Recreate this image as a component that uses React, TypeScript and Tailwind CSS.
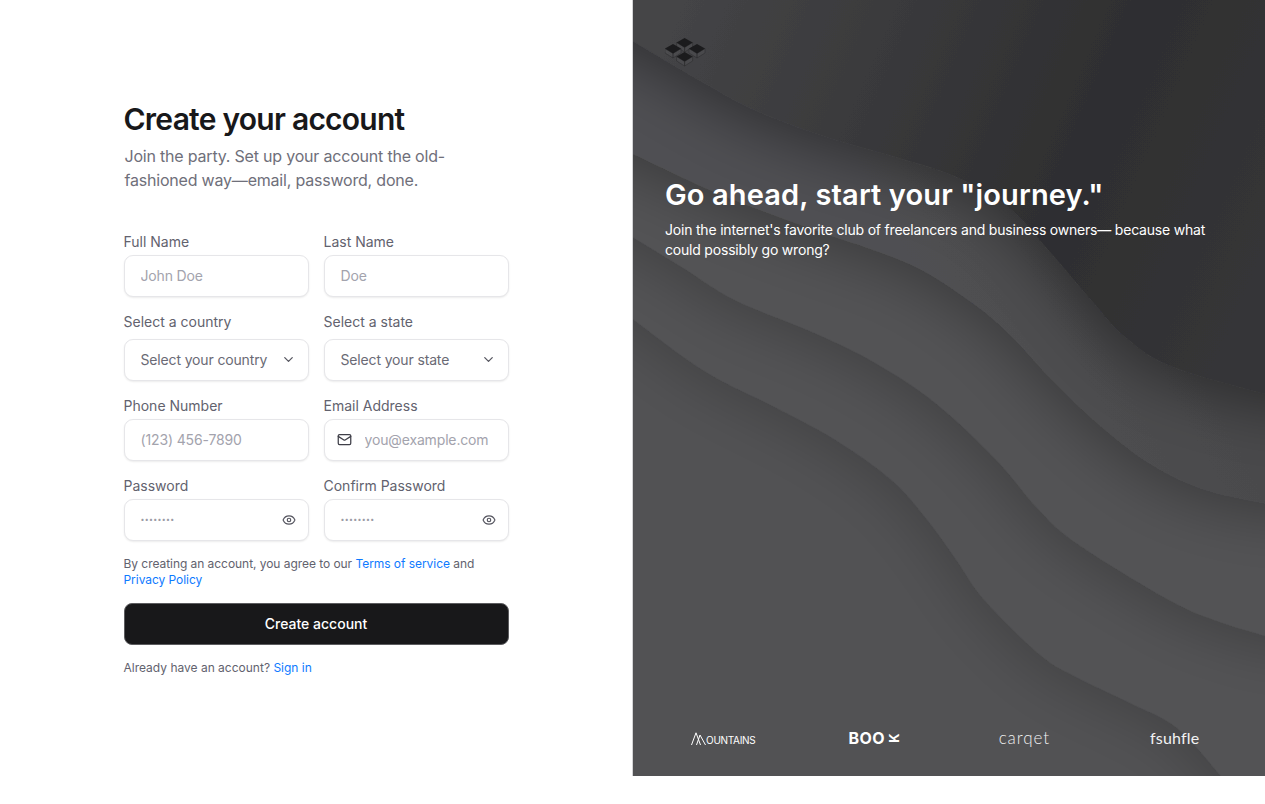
import { ChevronDown, Eye, Mail } from 'lucide-react'

const inputClass =
  'h-[42px] w-full rounded-[9px] border border-[#e6e6e9] bg-white px-4 text-sm tracking-[-0.15px] text-[#6a6a75] shadow-[0_1px_2px_rgba(0,0,0,0.08)] outline-none placeholder:text-[#a3a3ad]'

function Label({ text, className = 'mb-[3px]' }: { text: string; className?: string }) {
  return <label className={`block h-5 text-sm leading-5 text-[#62626e] ${className}`}>{text}</label>
}

function SelectBox({ text, label }: { text: string; label: string }) {
  return (
    <div>
      <Label text={label} className="mb-[7px]" />
      <div className="relative">
        <select className={`${inputClass} appearance-none`} defaultValue={text}>
          <option>{text}</option>
        </select>
        <ChevronDown size={15} className="pointer-events-none absolute right-[13px] top-[13px] text-[#55555f]" />
      </div>
    </div>
  )
}

function PasswordBox({ label }: { label: string }) {
  return (
    <div>
      <Label text={label} />
      <div className="relative">
        <div className={`${inputClass} flex items-center`}>
          <span className="text-[7px] tracking-[0.3px] text-[#9a9aa4]">••••••••</span>
        </div>
        <Eye size={14} className="absolute right-[13px] top-[14px] text-[#55555f]" />
      </div>
    </div>
  )
}

// catmull-rom through the traced points, so the bands stay smooth
function smooth(pts: number[][]) {
  let d = `M${pts[0][0]} ${pts[0][1]}`
  for (let i = 0; i < pts.length - 1; i++) {
    const p0 = pts[i - 1] || pts[i]
    const p1 = pts[i]
    const p2 = pts[i + 1]
    const p3 = pts[i + 2] || p2
    const c1x = p1[0] + (p2[0] - p0[0]) / 6
    const c1y = p1[1] + (p2[1] - p0[1]) / 6
    const c2x = p2[0] - (p3[0] - p1[0]) / 6
    const c2y = p2[1] - (p3[1] - p1[1]) / 6
    d += ` C${c1x} ${c1y} ${c2x} ${c2y} ${p2[0]} ${p2[1]}`
  }
  return d
}

const curves = [
  // lowest band first, each one is painted over the last and shades it
  [[620, 310], [702, 370], [774, 407], [835, 440], [891, 480], [927, 520], [956, 560], [984, 600], [1040, 655], [1076, 677], [1130, 703], [1177, 728], [1221, 776], [1240, 800]],
  [[620, 230], [681, 267], [734, 300], [814, 333], [875, 363], [935, 403], [996, 460], [1036, 507], [1076, 543], [1169, 600], [1220, 622], [1280, 640]],
  [[620, 148], [714, 192], [806, 227], [907, 263], [968, 300], [1008, 333], [1052, 380], [1097, 423], [1149, 463], [1206, 490], [1280, 506]],
  [[620, 34], [693, 77], [754, 110], [826, 137], [895, 157], [956, 177], [1008, 207], [1048, 250], [1091, 300], [1125, 337], [1173, 367], [1280, 398]],
]

const shadeIds = ['cast0', 'cast1', 'cast2', 'cast3']

function Waves() {
  return (
    <svg className="absolute inset-0 h-full w-full" viewBox="632 0 633 776" preserveAspectRatio="none">
      <defs>
        <linearGradient id="top" gradientUnits="userSpaceOnUse" x1="680" y1="10" x2="1260" y2="260">
          <stop offset="0" stopColor="#444446" />
          <stop offset="0.68" stopColor="#2e2e30" />
          <stop offset="1" stopColor="#353537" />
        </linearGradient>
        <linearGradient id="band2" gradientUnits="userSpaceOnUse" x1="950" y1="340" x2="1250" y2="180">
          <stop offset="0" stopColor="#505052" />
          <stop offset="1" stopColor="#464648" />
        </linearGradient>
        <filter id="cast0" filterUnits="userSpaceOnUse" x="200" y="-400" width="1500" height="1500">
          <feDropShadow dx="-8" dy="12" stdDeviation="26" floodColor="#000000" floodOpacity="0.17" />
        </filter>
        <filter id="cast1" filterUnits="userSpaceOnUse" x="200" y="-400" width="1500" height="1500">
          <feDropShadow dx="-8" dy="12" stdDeviation="26" floodColor="#000000" floodOpacity="0.2" />
        </filter>
        <filter id="cast2" filterUnits="userSpaceOnUse" x="200" y="-400" width="1500" height="1500">
          <feDropShadow dx="-8" dy="12" stdDeviation="28" floodColor="#000000" floodOpacity="0.27" />
        </filter>
        <filter id="cast3" filterUnits="userSpaceOnUse" x="200" y="-400" width="1500" height="1500">
          <feDropShadow dx="-8" dy="12" stdDeviation="30" floodColor="#000000" floodOpacity="0.38" />
        </filter>
      </defs>
      <rect x="632" y="0" width="633" height="776" fill="#525254" />
      {curves.map((pts, i) => {
        const last = pts[pts.length - 1]
        // run the shape far past the panel so its outer sides cast nothing we can see
        const d = `${smooth(pts)} L1600 ${last[1]} L1600 -300 L300 -300 L300 ${pts[0][1]} Z`
        const fill = i === 3 ? 'url(#top)' : i === 2 ? 'url(#band2)' : '#525254'
        return <path key={i} d={d} fill={fill} filter={`url(#${shadeIds[i]})`} />
      })}
    </svg>
  )
}

function Cube({ x, y }: { x: number; y: number }) {
  return (
    <g transform={`translate(${x} ${y})`}>
      <path d="M0 4.5 L0 9 L8 14 L8 9.5 Z M16 4.5 L16 9 L8 14 L8 9.5 Z" fill="#ffffff" fillOpacity="0.04" stroke="#2a2a2c" strokeWidth="0.5" />
      <path d="M0 4.5 L8 0 L16 4.5 L8 9.5 Z" fill="#1b1b1d" />
    </g>
  )
}

function Logo() {
  return (
    <svg width="41" height="30" viewBox="0 0 41 30" className="block">
      <Cube x={11.6} y={1} />
      <Cube x={0} y={7} />
      <Cube x={24} y={7} />
      <Cube x={11.6} y={15} />
    </svg>
  )
}

export default function App() {
  return (
    <div className="flex h-[776px] w-full bg-white font-['Inter',sans-serif]">
      <div className="flex w-[632px] shrink-0 items-center justify-center">
        <div className="w-[385px]">
          <h1 className="text-[30px] font-semibold leading-9 tracking-[-0.75px] text-[#18181a]">Create your account</h1>
          <p className="mt-[7px] w-[340px] pl-px text-base leading-6 tracking-[-0.2px] text-[#6f6f7a]">
            Join the party. Set up your account the old-fashioned way—email, password, done.
          </p>

          <div className="mt-[40px] grid grid-cols-2 gap-x-[15px] gap-y-[15px]">
            <div>
              <Label text="Full Name" />
              <input className={inputClass} placeholder="John Doe" />
            </div>
            <div>
              <Label text="Last Name" />
              <input className={inputClass} placeholder="Doe" />
            </div>
            <SelectBox label="Select a country" text="Select your country" />
            <SelectBox label="Select a state" text="Select your state" />
            <div>
              <Label text="Phone Number" />
              <input className={inputClass} placeholder="(123) 456-7890" />
            </div>
            <div>
              <Label text="Email Address" />
              <div className="relative">
                <input className={`${inputClass} pl-10`} placeholder="you@example.com" />
                <Mail size={15} className="absolute left-[13px] top-[13px] text-[#3f3f48]" />
              </div>
            </div>
            <PasswordBox label="Password" />
            <PasswordBox label="Confirm Password" />
          </div>

          <p className="mt-[15px] text-xs leading-4 tracking-[-0.05px] text-[#62626e]">
            By creating an account, you agree to our <a className="text-[#0e7aff]">Terms of service</a> and{' '}
            <a className="text-[#0e7aff]">Privacy Policy</a>
          </p>
          <button className="mt-[15px] h-[42px] w-full rounded-[8px] border border-[#5c5c5f] bg-[#18181a] text-sm font-medium text-white">
            Create account
          </button>
          <p className="mt-[15px] text-xs leading-4 text-[#62626e]">
            Already have an account? <a className="text-[#0e7aff]">Sign in</a>
          </p>
        </div>
      </div>

      <div className="relative w-[633px] shrink-0 overflow-hidden border-l border-[#d4d4d6] bg-[#3a3a3c]">
        <Waves />
        <div className="relative flex h-full flex-col pl-8 pr-8 pt-[37px]">
          <Logo />
          <h2 className="mt-[110px] text-[29px] font-semibold leading-9 tracking-[0.13px] text-white">
            Go ahead, start your "journey."
          </h2>
          <p className="mt-[7px] text-sm leading-5 tracking-[-0.2px] text-white">
            Join the internet's favorite club of freelancers and business owners— because what could possibly go wrong?
          </p>

          <div className="mt-auto mb-[28px] grid grid-cols-4 items-center gap-x-[34px] text-center text-white">
            <div className="flex items-end justify-center">
              <svg width="15" height="13" viewBox="0 0 15 13" fill="none" stroke="currentColor" strokeWidth="1">
                <path d="M0.5 13 L5 0.8 L9.5 13 M5.5 13 L9 3 L14.5 13" />
              </svg>
              <span className="text-[10px] leading-[10px] tracking-[-0.3px]">OUNTAINS</span>
            </div>
            <div className="flex items-center justify-center gap-[3px]">
              <span className="text-[16px] font-bold leading-4 tracking-[0.4px]">BOO</span>
              <span className="flex h-3 w-[11px] -rotate-90 items-center justify-center text-[13px] font-bold leading-3">K</span>
            </div>
            <div className="font-['Lato',sans-serif] text-[17px] font-light leading-5 tracking-[0.9px] text-[#f0f0f1]">carqet</div>
            <div className="font-['Lato',sans-serif] text-[16px] leading-5 tracking-[0.2px] text-[#f2f2f3]">fsuhfle</div>
          </div>
        </div>
      </div>
    </div>
  )
}
